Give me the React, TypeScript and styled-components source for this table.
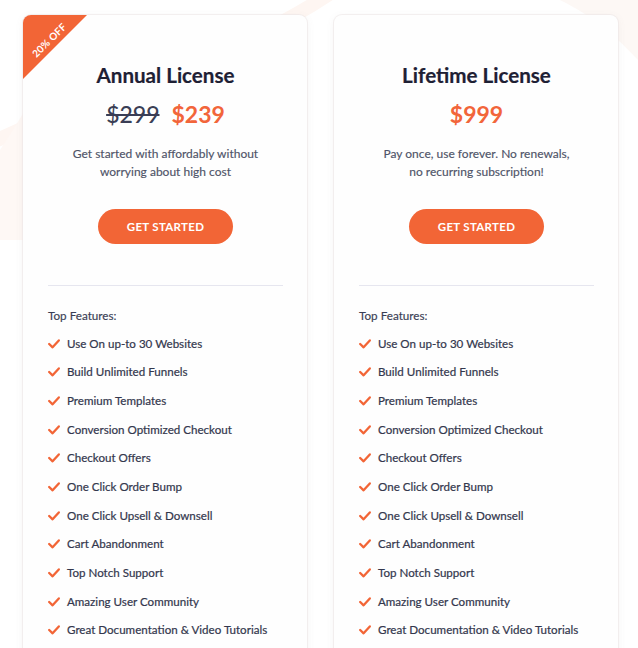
import React from "react";
import styled, { createGlobalStyle } from "styled-components";

const GlobalStyle = createGlobalStyle`
  html, body { margin: 0; padding: 0; background: #ffffff; }
  body { font-family: Lato, "Open Sans", sans-serif; overflow: hidden; }
  * { box-sizing: border-box; }
`;

const Page = styled.div`
  position: relative;
  width: 638px;
  height: 648px;
  overflow: hidden;
  background: #ffffff;
`;

const Backdrop = styled.svg`
  position: absolute;
  inset: 0;
  z-index: 0;
`;

const Cards = styled.div`
  position: relative;
  z-index: 1;
  display: flex;
  gap: 27px;
  padding: 15px 0 0 23px;
`;

const Card = styled.div`
  position: relative;
  width: 284px;
  background: #fefefe;
  border-radius: 8px;
  box-shadow: 0 0 0 1px rgba(236, 230, 230, 0.6), 0 2px 8px rgba(120, 100, 100, 0.08);
  overflow: hidden;
  padding: 0 24px 40px 25px;
  display: flex;
  flex-direction: column;
`;

const Ribbon = styled.div`
  position: absolute;
  top: 0;
  left: 0;
  width: 64px;
  height: 64px;
  background: #f26536;
  clip-path: polygon(0 0, 100% 0, 0 100%);
`;

const RibbonText = styled.span`
  position: absolute;
  top: 19px;
  left: -3px;
  width: 58px;
  text-align: center;
  transform: rotate(-45deg);
  font-family: Lato, sans-serif;
  font-weight: 700;
  font-size: 10px;
  line-height: 12px;
  color: #ffffff;
  letter-spacing: 0.2px;
`;

const Header = styled.div`
  display: flex;
  flex-direction: column;
  align-items: center;
  padding-top: 48px;
`;

const Title = styled.h2`
  margin: 0;
  font-family: Lato, sans-serif;
  font-weight: 700;
  font-size: 20.6px;
  line-height: 24px;
  color: #1e2034;
  -webkit-text-stroke: 0.2px #1e2034;
`;

const PriceRow = styled.div`
  display: flex;
  gap: 12px;
  align-items: center;
  margin-top: 13px;
  height: 28px;
`;

const Price = styled.span<{ $old?: boolean }>`
  font-family: Lato, sans-serif;
  font-weight: ${(p) => (p.$old ? 500 : 700)};
  font-size: 23px;
  line-height: 28px;
  color: ${(p) => (p.$old ? "#3a3e55" : "#f2653a")};
  text-decoration: ${(p) => (p.$old ? "line-through" : "none")};
  text-decoration-thickness: 1.5px;
`;

const Desc = styled.p`
  margin: 17px 0 0;
  font-family: Lato, sans-serif;
  font-size: 12px;
  line-height: 18px;
  color: #4f5468;
  text-align: center;
  -webkit-text-stroke: 0.15px #4f5468;
`;

const Button = styled.button`
  margin-top: 28px;
  width: 135px;
  height: 35px;
  border: none;
  border-radius: 18px;
  background: #f26536;
  color: #ffffff;
  font-family: Lato, sans-serif;
  font-weight: 700;
  font-size: 11.5px;
  letter-spacing: 0.3px;
  cursor: pointer;
`;

const Divider = styled.hr`
  margin: 41px 0 0;
  border: none;
  border-top: 1px solid #e6e6ef;
  width: 100%;
`;

const FeaturesLabel = styled.div`
  margin-top: 21px;
  font-family: Lato, sans-serif;
  font-size: 11.7px;
  line-height: 16px;
  color: #3a3e55;
  -webkit-text-stroke: 0.15px #3a3e55;
`;

const FeatureList = styled.ul`
  list-style: none;
  margin: 12.5px 0 0;
  padding: 0;
  display: flex;
  flex-direction: column;
  gap: 12.7px;
`;

const Feature = styled.li`
  display: flex;
  align-items: center;
  gap: 7px;
  font-family: Lato, sans-serif;
  font-size: 11.6px;
  line-height: 16px;
  color: #33374d;
  -webkit-text-stroke: 0.2px #33374d;
`;

const Check = () => (
  <svg width="12" height="10" viewBox="0 0 12 10" fill="none">
    <path d="M1.2 5 L4.6 8.3 L10.8 1.4" stroke="#f26536" strokeWidth="2.3" strokeLinecap="round" strokeLinejoin="round" />
  </svg>
);

const features = [
  "Use On up-to 30 Websites",
  "Build Unlimited Funnels",
  "Premium Templates",
  "Conversion Optimized Checkout",
  "Checkout Offers",
  "One Click Order Bump",
  "One Click Upsell & Downsell",
  "Cart Abandonment",
  "Top Notch Support",
  "Amazing User Community",
  "Great Documentation & Video Tutorials",
];

type Plan = {
  title: string;
  oldPrice?: string;
  price: string;
  desc: [string, string];
  ribbon?: string;
};

const plans: Plan[] = [
  {
    title: "Annual License",
    oldPrice: "$299",
    price: "$239",
    desc: ["Get started with affordably without", "worrying about high cost"],
    ribbon: "20% OFF",
  },
  {
    title: "Lifetime License",
    price: "$999",
    desc: ["Pay once, use forever. No renewals,", "no recurring subscription!"],
  },
];

export default function App() {
  return (
    <>
      <GlobalStyle />
      <Page>
        <Backdrop width="638" height="648" viewBox="0 0 638 648">
          <path d="M-40 160 C 60 100, 220 70, 335 -10" stroke="#fef6f2" strokeWidth="14" fill="none" />
          <path d="M0 150 C 8 138, 16 125, 24 112 L 24 240 L 0 240 Z" fill="#fef8f5" />
          <path d="M560 0 L 638 0 L 638 60 C 610 30, 590 15, 560 0 Z" fill="#fdf8f5" />
        </Backdrop>
        <Cards>
          {plans.map((plan) => (
            <Card key={plan.title}>
              {plan.ribbon && (
                <Ribbon>
                  <RibbonText>{plan.ribbon}</RibbonText>
                </Ribbon>
              )}
              <Header>
                <Title>{plan.title}</Title>
                <PriceRow>
                  {plan.oldPrice && <Price $old>{plan.oldPrice}</Price>}
                  <Price>{plan.price}</Price>
                </PriceRow>
                <Desc>
                  {plan.desc[0]}
                  <br />
                  {plan.desc[1]}
                </Desc>
                <Button>GET STARTED</Button>
              </Header>
              <Divider />
              <FeaturesLabel>Top Features:</FeaturesLabel>
              <FeatureList>
                {features.map((f) => (
                  <Feature key={f}>
                    <Check />
                    {f}
                  </Feature>
                ))}
              </FeatureList>
            </Card>
          ))}
        </Cards>
      </Page>
    </>
  );
}
